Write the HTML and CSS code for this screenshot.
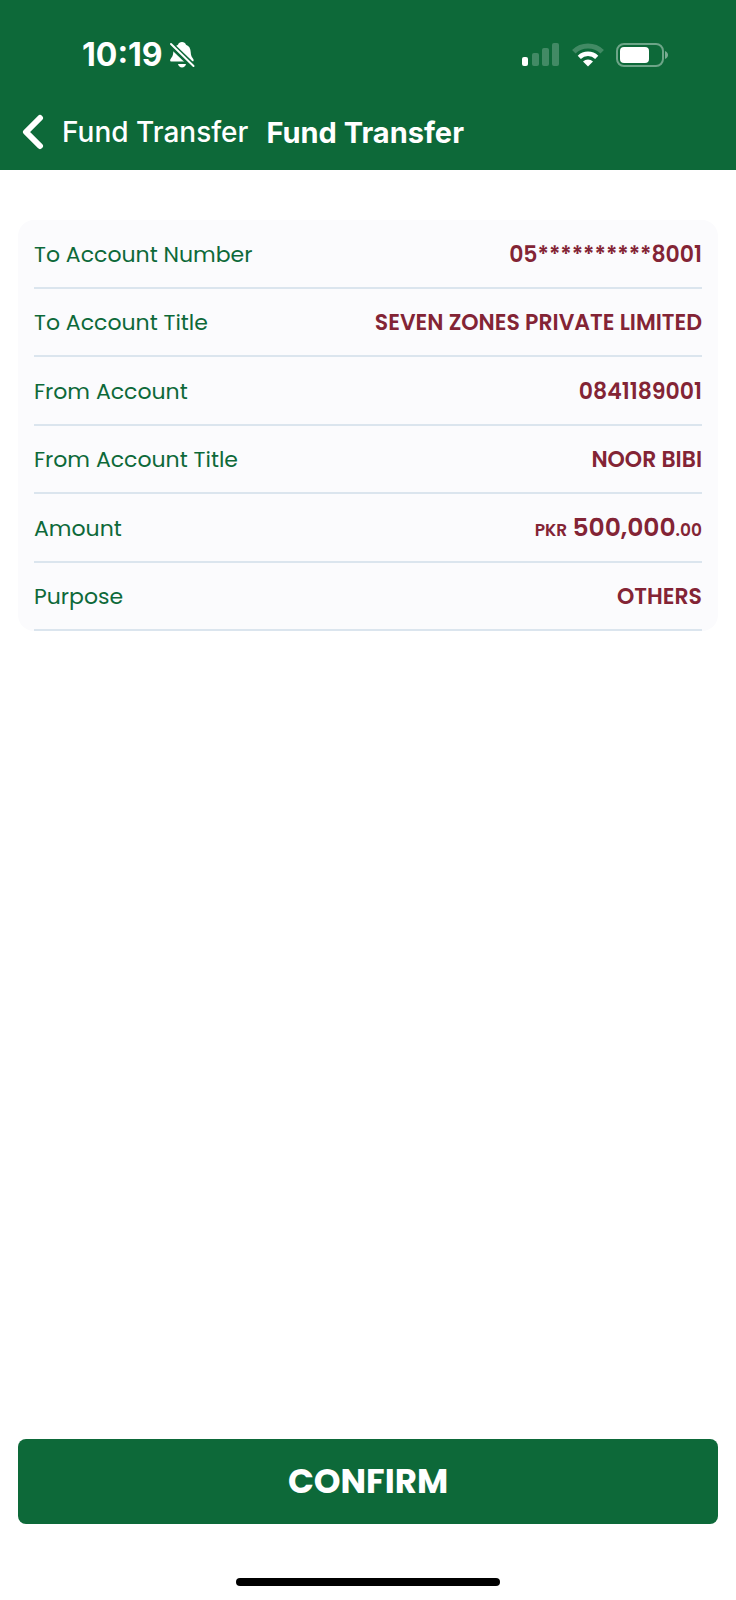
FILE: index.html
```html
<!DOCTYPE html>
<html lang="en">
<head>
<meta charset="utf-8">
<meta name="viewport" content="width=device-width, initial-scale=1">
<title>Fund Transfer</title>
<link rel="stylesheet" href="styles.css">
</head>
<body>
<header class="header">
  <div class="status">
    <div class="status-left">
      <time class="clock">10:19</time>
      <svg class="bell" width="26" height="28" viewBox="0 0 26 28" aria-label="Silent">
        <path fill="#fff" d="M13 1c2 0 3.400 1.100 4 2.700 3.300 1.300 4.600 3.900 4.700 7.400.1 3.600 1.200 5.200 2.500 6.800.8 1 .7 2.700-1.200 2.700H2.800c-1.900 0-2-1.700-1.200-2.700 1.400-1.600 2.600-3.200 2.700-6.800.1-3.500 1.400-6.100 4.700-7.400C9.600 2.100 11 1 13 1z"/>
        <path fill="#fff" d="M9 23h8c-.5 2-2 3.500-4 3.500S9.500 25 9 23z"/>
        <path stroke="#0d6939" stroke-width="6" d="M1.500 3.500 24 25"/>
        <path stroke="#fff" stroke-width="2" stroke-linecap="round" d="M2 3 24.500 25"/>
      </svg>
    </div>
    <div class="status-right">
      <svg width="38" height="24" viewBox="0 0 38 24" fill="#fff" aria-label="Signal">
        <rect x="0" y="14" width="6" height="9" rx="2"/>
        <g opacity=".22"><rect x="10" y="10" width="7" height="13" rx="2"/><rect x="20" y="5" width="7" height="18" rx="2"/><rect x="30" y="0" width="7" height="23" rx="2"/></g>
      </svg>
      <svg width="32" height="24" viewBox="0 0 32 24" fill="none" stroke="#fff" aria-label="Wi-Fi">
        <path opacity=".22" stroke-width="5" d="M1.800 8.700a20.500 20.500 0 0 1 28.400 0"/>
        <path stroke-width="4.500" d="M7.300 14.300a12.500 12.500 0 0 1 17.400 0"/>
        <path fill="#fff" stroke="none" d="M16 23.500l-5-5a7.200 7.200 0 0 1 10 0z"/>
      </svg>
      <svg width="53" height="24" viewBox="0 0 53 24" aria-label="Battery">
        <rect x="1" y="1" width="46" height="22" rx="7" fill="none" stroke="#fff" stroke-opacity=".4" stroke-width="2"/>
        <rect x="4" y="4" width="29" height="16" rx="4" fill="#fff"/>
        <path fill="#fff" opacity=".45" d="M49 8c4 1.500 4 6.500 0 8z"/>
      </svg>
    </div>
  </div>
  <nav class="nav">
    <button class="back" type="button">
      <svg width="22" height="36" viewBox="0 0 22 36" fill="none" stroke="#fff" stroke-width="6" stroke-linecap="round" stroke-linejoin="round" aria-hidden="true"><path d="M18 4 4 18 18 32"/></svg>
      <span>Fund Transfer</span>
    </button>
    <h1 class="title">Fund Transfer</h1>
  </nav>
</header>
<main class="main">
  <dl class="card">
    <div class="row"><dt>To Account Number</dt><dd>05**********8001</dd></div>
    <div class="row"><dt>To Account Title</dt><dd>SEVEN ZONES PRIVATE LIMITED</dd></div>
    <div class="row"><dt>From Account</dt><dd>0841189001</dd></div>
    <div class="row"><dt>From Account Title</dt><dd>NOOR BIBI</dd></div>
    <div class="row"><dt>Amount</dt><dd><span class="small">PKR</span> <span class="big">500,000</span><span class="small">.00</span></dd></div>
    <div class="row"><dt>Purpose</dt><dd>OTHERS</dd></div>
  </dl>
  <button class="confirm" type="button">CONFIRM</button>
</main>
<footer class="footer"><div class="home"></div></footer>
</body>
</html>
```
FILE: styles.css
```css
* { box-sizing: border-box; }
body {
  margin: 0;
  min-height: 100vh;
  display: flex;
  flex-direction: column;
  background: #fff;
  font-family: Poppins, Inter, "Liberation Sans", sans-serif;
}
button { border: 0; margin: 0; font-family: inherit; cursor: pointer; }
svg { display: block; flex: none; }
.header {
  height: 170px;
  background: #0d6939;
  color: #fff;
  font-family: Inter, "Liberation Sans", sans-serif;
}
.status {
  display: flex;
  justify-content: space-between;
  align-items: center;
  height: 94px;
  padding: 16px 67px 0 82px;
}
.status-left { display: flex; align-items: center; gap: 6px; }
.status-right { display: flex; align-items: center; gap: 12px; }
.clock { font-size: 32px; font-weight: 700; line-height: 36px; }
.nav {
  display: flex;
  align-items: center;
  height: 76px;
  gap: 18px;
  padding: 0 22px;
}
.back {
  display: flex;
  align-items: center;
  gap: 18px;
  padding: 0;
  background: none;
  color: #fff;
  font-size: 28px;
  font-weight: 500;
}
.title { margin: 0; font-size: 29px; font-weight: 700; }
.main {
  flex: 1;
  display: flex;
  flex-direction: column;
  justify-content: space-between;
  padding: 50px 18px 0;
}
.card {
  display: grid;
  grid-auto-rows: 1fr;
  min-height: 411px;
  margin: 0;
  padding: 0 16px;
  border-radius: 16px;
  background: #fbfbfd;
}
.row {
  display: flex;
  justify-content: space-between;
  align-items: center;
  gap: 16px;
  padding-top: 2px;
  border-bottom: 2px solid #dbe5ee;
  font-size: 22px;
}
.row dt { color: #0d6939; }
.row dd { margin: 0; color: #832435; font-weight: 600; }
.small { font-size: 17px; }
.big { font-size: 25px; }
.confirm {
  height: 85px;
  border-radius: 8px;
  background: #0d6939;
  color: #fff;
  font-size: 34px;
  font-weight: 700;
}
.footer {
  display: flex;
  justify-content: center;
  align-items: flex-end;
  height: 76px;
  padding-bottom: 14px;
}
.home { width: 36%; height: 8px; border-radius: 4px; background: #000; }
```
